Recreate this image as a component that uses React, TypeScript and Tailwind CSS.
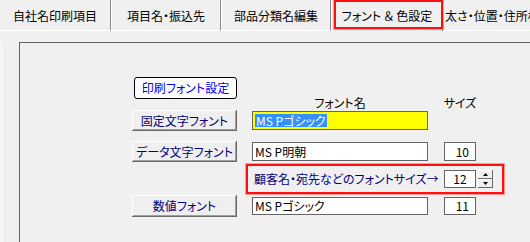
import React from 'react';

const tabs = [
  { label: '自社名印刷項目', w: 'w-[111px]' },
  { label: '項目名・振込先', w: 'w-[110px]' },
  { label: '部品分類名編集', w: 'w-[110px]' },
  { label: 'フォント ＆ 色設定', w: 'w-[112px]', active: true },
  { label: '太さ・位置・住所枠', w: 'w-[120px]' },
];

// Windows classic raised button
const ClassicButton: React.FC<{ children: React.ReactNode; tall?: boolean }> = ({ children, tall }) => (
  <div
    className={`${tall ? 'h-[22px]' : 'h-[21px]'} w-[105px] shrink-0 flex items-center justify-center bg-[#efefef] text-[#000080] shadow-[inset_-1px_-1px_0_#696969,inset_1px_1px_0_#ffffff,inset_-2px_-2px_0_#a0a0a0]`}
  >
    {children}
  </div>
);

const TextBox: React.FC<{ children: React.ReactNode; yellow?: boolean; h?: string }> = ({ children, yellow, h = 'h-[19px]' }) => (
  <div
    className={`${h} w-[176px] shrink-0 border border-[#646464] ${yellow ? 'bg-[#ffff00]' : 'bg-white'} flex items-center pl-[2px] whitespace-nowrap`}
  >
    {children}
  </div>
);

const SizeBox: React.FC<{ value: string; h?: string }> = ({ value, h = 'h-[19px]' }) => (
  <div className={`${h} w-[32px] shrink-0 border border-[#646464] bg-white flex items-center justify-end pr-[6px]`}>
    {value}
  </div>
);

const SpinButton: React.FC<{ up?: boolean }> = ({ up }) => (
  <div className="h-[9px] w-[15px] flex items-center justify-center bg-[#efefef] shadow-[inset_-1px_-1px_0_#696969,inset_1px_1px_0_#ffffff]">
    <svg width="5" height="3" viewBox="0 0 5 3">
      {up ? <path d="M2.5 0 L5 3 L0 3 Z" fill="#000" /> : <path d="M0 0 L5 0 L2.5 3 Z" fill="#000" />}
    </svg>
  </div>
);

export default function App() {
  return (
    <div className="w-[530px] h-[242px] overflow-hidden bg-[#f0f0f0] text-[12px] leading-[14px] text-black font-['Noto_Sans_CJK_JP',sans-serif] [font-feature-settings:'palt']">
      {/* Tab strip */}
      <div className="flex h-[31px]">
        {tabs.map((t, i) => (
          <div
            key={t.label}
            className={`${t.w} shrink-0 h-[31px] flex items-center justify-center whitespace-nowrap ${
              t.active ? 'relative border-l border-white border-r border-r-[#696969]' : 'border-b border-white border-r border-r-[#8a8a8a]'
            } ${i > 0 && !t.active ? 'border-l border-l-white' : ''} ${i === 4 ? 'justify-start pl-[1px]' : ''}`}
          >
            <span className="mt-[1px]">{t.label}</span>
            {t.active && (
              <div className="absolute left-[2px] right-[-1px] top-0 h-[29px] border-2 border-[#ff1010] shadow-[0_0_0_1px_#ff9a9a]" />
            )}
          </div>
        ))}
      </div>

      {/* Panel */}
      <div className="ml-px border-l border-white h-[211px]">
        <div className="ml-[17px] mt-[11px] w-[600px] h-[300px] border border-[#646464]">
          {/* 印刷フォント設定 */}
          <div className="mt-[34px] ml-[114px] w-[103px] h-[22px] border border-black rounded-[3px] bg-white text-[#0000ff] flex items-center justify-center">
            印刷フォント設定
          </div>

          {/* Column headers */}
          <div className="-mt-[2px] h-[12px] flex pl-[232px] leading-[12px] whitespace-nowrap">
            <div className="w-[176px] text-center">フォント名</div>
            <div className="ml-[10px] w-[44px] text-center">サイズ</div>
          </div>

          {/* 固定文字フォント */}
          <div className="mt-[1px] h-[21px] flex items-center pl-[112px]">
            <ClassicButton>固定文字フォント</ClassicButton>
            <div className="ml-[15px]">
              <TextBox yellow>
                <span className="bg-[#3390ff] text-white px-px leading-[13px]">MS Pゴシック</span>
              </TextBox>
            </div>
          </div>

          {/* データ文字フォント */}
          <div className="mt-[10px] h-[21px] flex items-center pl-[112px]">
            <ClassicButton>データ文字フォント</ClassicButton>
            <div className="ml-[15px]">
              <TextBox>MS P明朝</TextBox>
            </div>
            <div className="ml-[16px]">
              <SizeBox value="10" />
            </div>
          </div>

          {/* 顧客名・宛先 font size */}
          <div className="mt-[2px] ml-[226px] w-[258px] h-[30px] border-2 border-[#ff1010] shadow-[0_0_0_1px_#ff9a9a] flex items-center">
            <div className="w-[196px] shrink-0 pl-[6px] text-[#000080] whitespace-nowrap">顧客名・宛先などのフォントサイズ→</div>
            <div className="h-[18px] w-[32px] shrink-0 border border-[#646464] bg-white flex items-center justify-center">12</div>
            <div className="ml-[2px] flex flex-col gap-0">
              <SpinButton up />
              <SpinButton />
            </div>
          </div>

          {/* 数値フォント */}
          <div className="mt-[1px] h-[22px] flex items-center pl-[112px]">
            <ClassicButton tall>数値フォント</ClassicButton>
            <div className="ml-[15px]">
              <TextBox h="h-[18px]">MS Pゴシック</TextBox>
            </div>
            <div className="ml-[16px]">
              <SizeBox value="11" h="h-[18px]" />
            </div>
          </div>
        </div>
      </div>
    </div>
  );
}
